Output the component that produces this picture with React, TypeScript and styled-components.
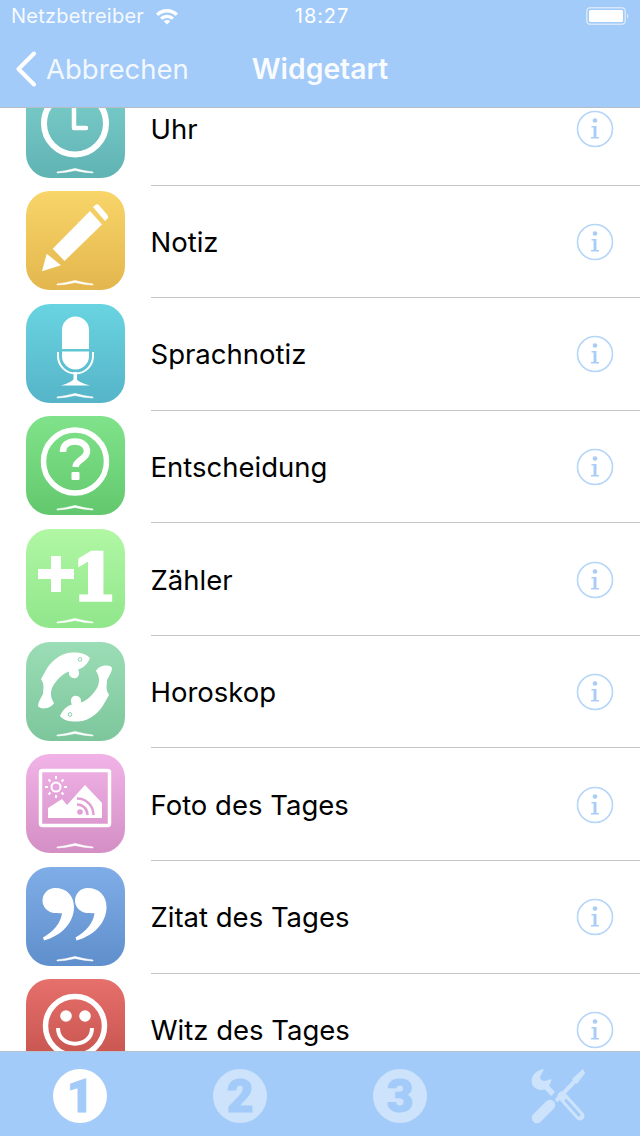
import React from "react";
import styled, { createGlobalStyle } from "styled-components";

const Global = createGlobalStyle`
  html, body { margin: 0; padding: 0; background: #fff; }
  body { font-family: Inter, "Liberation Sans", sans-serif; }
`;

const BLUE = "#a3cbf9";
const PALE = "#cde2fb";

const Page = styled.div`
  width: 640px; height: 1136px; display: flex; flex-direction: column; overflow: hidden; background: #fff;
`;
const Header = styled.header`
  height: 107px; background: ${BLUE}; border-bottom: 1px solid #b4bcc6; flex: none; color: #fff;
  display: flex; flex-direction: column;
`;
const StatusBar = styled.div`
  height: 31px; padding: 0 11px; display: grid; grid-template-columns: 1fr auto 1fr; align-items: center;
  font-size: 20px; color: #fff;
`;
const Carrier = styled.div`
  display: flex; align-items: center; gap: 11px; color: rgba(255,255,255,.92); font-weight: 400;
  letter-spacing: .25px;
`;
const Clock = styled.div` font-weight: 400; letter-spacing: .9px; margin-left: 4px; `;
const BatteryWrap = styled.div` display: flex; justify-content: flex-end; `;
const NavBar = styled.div`
  flex: 1; display: grid; grid-template-columns: 1fr auto 1fr; align-items: center; padding: 0 15px 1px;
`;
const Back = styled.div`
  display: flex; align-items: center; gap: 9px; font-size: 27.5px; color: rgba(255,255,255,.88);
`;
const Title = styled.div` font-size: 28.3px; font-weight: 600; color: rgba(255,255,255,.95); `;
const Content = styled.main` flex: 1; min-height: 0; overflow: hidden; `;
const List = styled.ul`
  list-style: none; margin: -35px 0 0; padding: 0;
`;
const Row = styled.li`
  height: 112.57px; box-sizing: border-box; display: flex; align-items: center; padding-left: 26px; position: relative;
  &::after {
    content: ""; position: absolute; left: 151px; right: 0; bottom: 0; height: 1px; background: #c4c4c6;
  }
`;
const IconTile = styled.div<{ $from: string; $to: string }>`
  width: 99px; height: 99px; border-radius: 24px; flex: none; margin-top: -2px; overflow: hidden;
  background: linear-gradient(${p => p.$from}, ${p => p.$to});
  svg { display: block; }
`;
const Label = styled.div`
  flex: 1; margin-left: 25.5px; font-size: 27.5px; color: #000; font-weight: 400;
`;
const InfoWrap = styled.div` width: 38px; height: 38px; margin-right: 26px; flex: none; svg { display: block; } `;
const TabBar = styled.nav`
  height: 84px; flex: none; background: ${BLUE}; border-top: 1px solid #b8c2cd;
  display: grid; grid-template-columns: repeat(4, 160px); align-items: center; justify-items: center;
`;
const TabDigit = styled.div<{ $active?: boolean }>`
  width: 54px; height: 54px; border-radius: 50%; margin-top: 3px;
  background: ${p => (p.$active ? "#fff" : PALE)}; color: ${BLUE};
  display: flex; align-items: center; justify-content: center;
  font-family: Roboto, "Liberation Sans", sans-serif; font-weight: 900; font-size: 46px; line-height: 1;
  -webkit-text-stroke: 1px ${BLUE};
`;
const ToolsWrap = styled.div` margin: 3px 4px 0 0; svg { display: block; } `;

const W = "#fff";

const Chev = () => (
  <path d="M31 93 Q40 92 49 89.5 Q58 92 67 93 L67 94 Q58 93.5 49 91.5 Q40 93.5 31 94Z" fill={W} stroke={W} strokeWidth=".6" />
);
const Svg: React.FC<{ children: React.ReactNode }> = ({ children }) => (
  <svg width="99" height="99" viewBox="0 0 99 99">{children}<Chev /></svg>
);

const ClockIcon = () => (
  <Svg>
    <circle cx="49" cy="44.5" r="31" fill="none" stroke={W} strokeWidth="6" />
    <path d="M48 29V49H60" fill="none" stroke={W} strokeWidth="4.5" strokeLinecap="round" strokeLinejoin="round" />
  </Svg>
);
const PencilIcon = () => (
  <Svg>
    <path d="M16 80.300 L20.700 62.700 L35 74.300Z" fill={W} />
    <path d="M26.700 57.700 L64 20 L76 33.500 L38.500 70 Z" fill={W} />
    <path d="M67 16 L70 13.500 Q71.500 12.800 73 14.300 L81.500 24 Q83 26 81.500 27.500 L79 30Z" fill={W} />
  </Svg>
);
const MicIcon = () => (
  <Svg>
    <path d="M36 45V26A13.500 13.500 0 0 1 63 26V45Z" fill={W} />
    <path d="M36 47.500H63V52A13.500 13.500 0 0 1 36 52Z" fill={W} />
    <path d="M32 48V52A17.500 17.500 0 0 0 67 52V48" fill="none" stroke={W} strokeWidth="2" />
    <rect x="47.500" y="68" width="3.500" height="11" fill={W} />
    <path d="M35 81.500Q45 79 49 74Q53 79 64 81.500Z" fill={W} />
  </Svg>
);
const QuestionIcon = () => (
  <Svg>
    <circle cx="49" cy="45.500" r="31.500" fill="none" stroke={W} strokeWidth="5.500" />
    <path d="M37 36C37 29 42 25.500 49 25.500C56 25.500 61 29.500 61 35.500C61 43 50 43.500 49.500 51" fill="none" stroke={W} strokeWidth="6.500" />
    <rect x="45.500" y="56" width="8" height="8" rx="1" fill={W} />
  </Svg>
);
const CounterIcon = () => (
  <Svg>
    <path d="M25 27H35V40H48V50H35V63H25V50H12V40H25Z" fill={W} />
    <text x="68.500" y="70.500" textAnchor="middle" fontFamily="'DejaVu Serif', serif" fontWeight="900" fontSize="64" fill={W} stroke={W} strokeWidth="3.500">1</text>
  </Svg>
);
const fish = "M64 16C60 11 52 10 46 10.500C34 11 24 20 19 30L15 37L17 41C18 45 17 49 17 52C15 56 12 60 12 64C14 68 25 67 28 61C25 56 24 52 26 46C30 38 36 32 43 29.500C42 34 46 37 50 36C53 35 54 31 52 27.500C58 26 62 21 64 16Z";
const FishIcon = () => (
  <Svg>
    <path d={fish} fill={W} />
    <circle cx="54" cy="17.500" r="1.800" fill="none" stroke="#8fd3ac" strokeWidth="1" />
    <g transform="rotate(180 49 45)">
      <path d={fish} fill={W} />
      <circle cx="54" cy="17.500" r="1.800" fill="none" stroke="#86cba3" strokeWidth="1" />
    </g>
  </Svg>
);
const PhotoIcon = () => (
  <Svg>
    <rect x="14.500" y="16.500" width="69" height="55" rx="2" fill="none" stroke={W} strokeWidth="3.500" />
    <circle cx="30" cy="33" r="4.500" fill="none" stroke={W} strokeWidth="2" />
    <path d="M30 22V25M30 41V44M19 33H22M38 33H41M22.500 25.500L24.500 27.500M35.500 38.500L37.500 40.500M22.500 40.500L24.500 38.500M35.500 27.500L37.500 25.500" stroke={W} strokeWidth="2" />
    <path d="M22 64V54L36 45L41 51L59 31L76 49V64Z" fill={W} />
    <circle cx="54" cy="58" r="2.800" fill="#e0a0d6" />
    <path d="M51 50.500C57 50.500 61.500 55 61.500 61M51 44.500C60.500 44.500 67.500 52 67.500 61" fill="none" stroke="#e0a0d6" strokeWidth="2.500" />
  </Svg>
);
const quote = "M29 21C41 21 48 29 48 40C48 56 35 69 18 73.500L17 70.500C27 65 35 56 36 46C33 46.500 31 46 29 46A12.500 12.500 0 1 1 29 21Z";
const QuoteIcon = () => (
  <Svg>
    <path d={quote} fill={W} />
    <path d={quote} fill={W} transform="translate(32.500 0)" />
  </Svg>
);
const SmileIcon = () => (
  <Svg>
    <circle cx="49" cy="47" r="29.500" fill="none" stroke={W} strokeWidth="5.500" />
    <circle cx="40" cy="37" r="5.800" fill={W} />
    <circle cx="59" cy="37" r="5.800" fill={W} />
    <path d="M32 49C32 70 66 70 66 49" fill="none" stroke={W} strokeWidth="4" />
  </Svg>
);

const InfoIcon = () => (
  <svg width="38" height="38" viewBox="0 0 38 38">
    <circle cx="19" cy="19" r="17.500" fill="none" stroke="#b5d5f9" strokeWidth="1.600" />
    <circle cx="19" cy="10.500" r="2.300" fill="#a9cdf7" />
    <path d="M15.500 16H20.500V27H23V28.500H15V27H17.500V17.500H15.500Z" fill="#a9cdf7" />
  </svg>
);

const Wifi = () => (
  <svg width="24" height="18" viewBox="0 0 24 18">
    <path d="M1 6.500A15.500 15.500 0 0 1 23 6.500L20.700 9A12.300 12.300 0 0 0 3.300 9Z" fill="#fff" />
    <path d="M5 10.500A10 10 0 0 1 19 10.500L16.800 12.800A7 7 0 0 0 7.200 12.800Z" fill="#fff" />
    <path d="M8.800 14.300A4.500 4.500 0 0 1 15.200 14.300L12 17.500Z" fill="#fff" />
  </svg>
);
const Battery = () => (
  <svg width="43" height="18" viewBox="0 0 43 18">
    <rect x=".75" y=".75" width="38.500" height="16.500" rx="3.500" fill="none" stroke="rgba(255,255,255,.55)" strokeWidth="1.500" />
    <rect x="3" y="3" width="34" height="12" rx="1.500" fill="#fff" />
    <path d="M41 6.500Q42.500 7 42.500 9Q42.500 11 41 11.500Z" fill="rgba(255,255,255,.55)" />
  </svg>
);
const BackChevron = () => (
  <svg width="22" height="36" viewBox="0 0 22 36" style={{ display: "block" }}>
    <path d="M19 2.500L3.500 18L19 33.500" fill="none" stroke="#fff" strokeWidth="4" strokeLinecap="round" strokeLinejoin="round" />
  </svg>
);
const Tools = () => (
  <svg width="56" height="56" viewBox="0 0 56 56">
    <g fill={PALE}>
      <path d="M14 1C6 2 0 8 2 16C4 21 10 23 15 21.500L21 28L25 24L19 17.500C21 14 22 12 21 11L15 13C12 13 10 11 10 9Z" />
      <path d="M42 11L53 1L55 5L47 16Z" />
    </g>
    <path d="M45 13L26 33" stroke={PALE} strokeWidth="4" fill="none" />
    <path d="M20 37L7 50" stroke={PALE} strokeWidth="10.500" strokeLinecap="round" fill="none" />
    <path d="M32 28L50 48" stroke={PALE} strokeWidth="9" strokeLinecap="round" fill="none" />
    <path d="M36 32.500L49 47" stroke={BLUE} strokeWidth="3" strokeLinecap="round" fill="none" />
  </svg>
);

const rows = [
  { label: "Uhr", from: "#7fd0cc", to: "#5fb3b3", Icon: ClockIcon },
  { label: "Notiz", from: "#f8d569", to: "#e3b64e", Icon: PencilIcon },
  { label: "Sprachnotiz", from: "#69d4e1", to: "#56b4c8", Icon: MicIcon },
  { label: "Entscheidung", from: "#80e38b", to: "#63c86d", Icon: QuestionIcon },
  { label: "Zähler", from: "#b1f7a4", to: "#90e68b", Icon: CounterIcon },
  { label: "Horoskop", from: "#9bddb6", to: "#7dc69c", Icon: FishIcon },
  { label: "Foto des Tages", from: "#f1b3e7", to: "#d48fc5", Icon: PhotoIcon },
  { label: "Zitat des Tages", from: "#7fade7", to: "#5f8fcc", Icon: QuoteIcon },
  { label: "Witz des Tages", from: "#e6706b", to: "#c14e4a", Icon: SmileIcon },
];

export default function App() {
  return (
    <Page>
      <Global />
      <Header>
        <StatusBar>
          <Carrier>Netzbetreiber <Wifi /></Carrier>
          <Clock>18:27</Clock>
          <BatteryWrap><Battery /></BatteryWrap>
        </StatusBar>
        <NavBar>
          <Back><BackChevron />Abbrechen</Back>
          <Title>Widgetart</Title>
        </NavBar>
      </Header>
      <Content>
        <List>
          {rows.map(({ label, from, to, Icon }) => (
            <Row key={label}>
              <IconTile $from={from} $to={to}><Icon /></IconTile>
              <Label>{label}</Label>
              <InfoWrap><InfoIcon /></InfoWrap>
            </Row>
          ))}
        </List>
      </Content>
      <TabBar>
        <TabDigit $active>1</TabDigit>
        <TabDigit>2</TabDigit>
        <TabDigit>3</TabDigit>
        <ToolsWrap><Tools /></ToolsWrap>
      </TabBar>
    </Page>
  );
}
